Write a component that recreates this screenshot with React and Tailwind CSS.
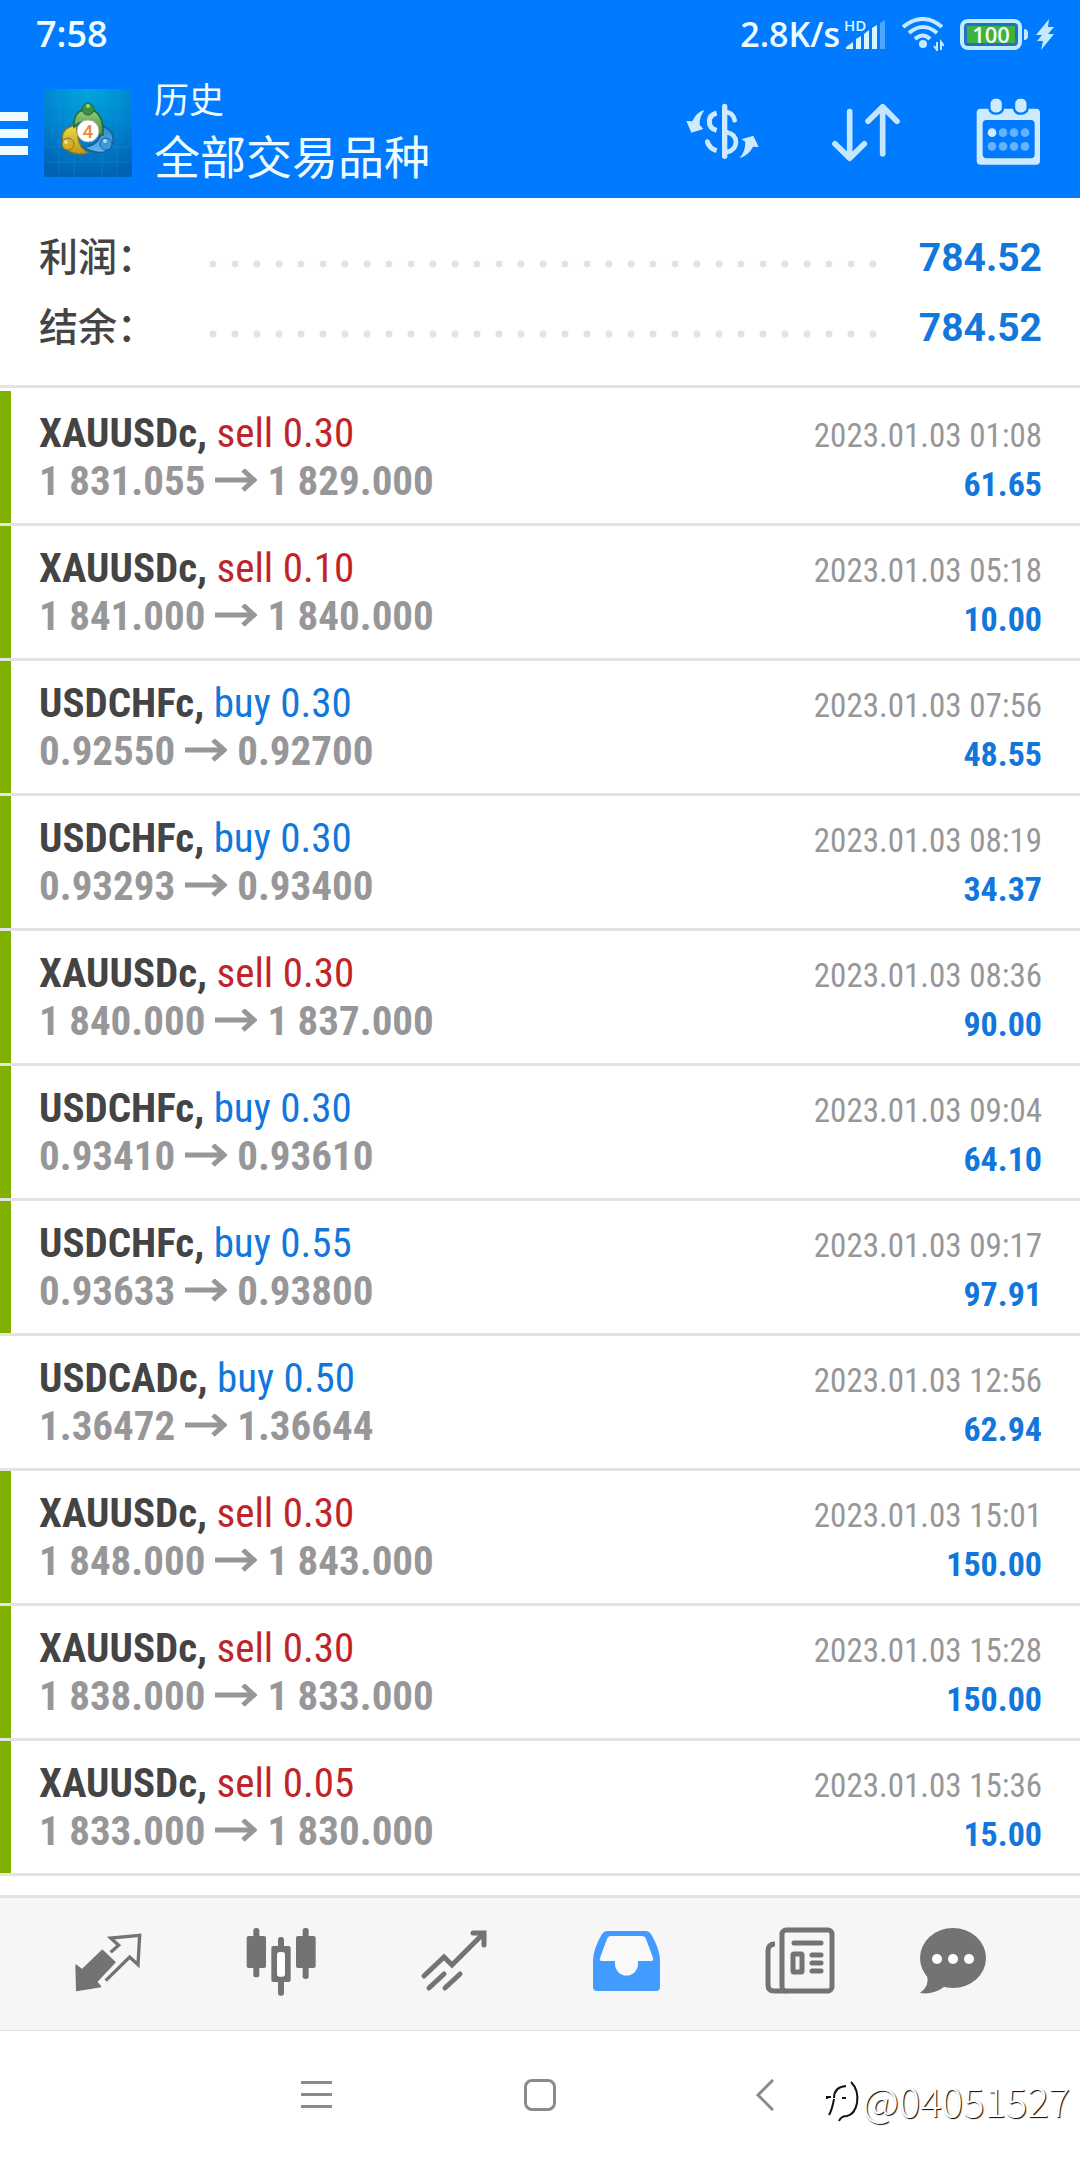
const trades = [
  { symbol: "XAUUSDc", side: "sell", volume: "0.30", open: "1 831.055", close: "1 829.000", time: "2023.01.03 01:08", profit: "61.65", marked: true },
  { symbol: "XAUUSDc", side: "sell", volume: "0.10", open: "1 841.000", close: "1 840.000", time: "2023.01.03 05:18", profit: "10.00", marked: true },
  { symbol: "USDCHFc", side: "buy", volume: "0.30", open: "0.92550", close: "0.92700", time: "2023.01.03 07:56", profit: "48.55", marked: true },
  { symbol: "USDCHFc", side: "buy", volume: "0.30", open: "0.93293", close: "0.93400", time: "2023.01.03 08:19", profit: "34.37", marked: true },
  { symbol: "XAUUSDc", side: "sell", volume: "0.30", open: "1 840.000", close: "1 837.000", time: "2023.01.03 08:36", profit: "90.00", marked: true },
  { symbol: "USDCHFc", side: "buy", volume: "0.30", open: "0.93410", close: "0.93610", time: "2023.01.03 09:04", profit: "64.10", marked: true },
  { symbol: "USDCHFc", side: "buy", volume: "0.55", open: "0.93633", close: "0.93800", time: "2023.01.03 09:17", profit: "97.91", marked: true },
  { symbol: "USDCADc", side: "buy", volume: "0.50", open: "1.36472", close: "1.36644", time: "2023.01.03 12:56", profit: "62.94", marked: false },
  { symbol: "XAUUSDc", side: "sell", volume: "0.30", open: "1 848.000", close: "1 843.000", time: "2023.01.03 15:01", profit: "150.00", marked: true },
  { symbol: "XAUUSDc", side: "sell", volume: "0.30", open: "1 838.000", close: "1 833.000", time: "2023.01.03 15:28", profit: "150.00", marked: true },
  { symbol: "XAUUSDc", side: "sell", volume: "0.05", open: "1 833.000", close: "1 830.000", time: "2023.01.03 15:36", profit: "15.00", marked: true },
];

const summary = [
  { label: "利润：", value: "784.52" },
  { label: "结余：", value: "784.52" },
];

function SignalIcon() {
  return (
    <svg className="h-[31px] w-[42px] overflow-visible" viewBox="0 0 42 31" fill="#d9f6ff" aria-hidden="true">
      <text x="0" y="12" fontSize="15" fontWeight="600" fontFamily="Open Sans, sans-serif">HD</text>
      <path d="M2 30 L2 28 L9 23 V30Z" />
      <path d="M12 30 V20 L17 17 V30Z" />
      <path d="M20 30 V15 L25 11 V30Z" />
      <path d="M28 30 V9 L33 6 V30Z" />
      <path d="M36 30 V4 L41 1 V30Z" opacity="0.35" />
    </svg>
  );
}

function WifiIcon() {
  return (
    <svg className="h-[34px] w-[43px]" viewBox="0 0 43 34" fill="none" stroke="#c4eaff" aria-hidden="true">
      <path d="M2 10 Q22 -6 41 10" strokeWidth="4" />
      <path d="M8 16 Q22 4 36 16" strokeWidth="4" />
      <path d="M14 22 Q22 15 29 22" strokeWidth="4" />
      <circle cx="22" cy="27" r="4" fill="#c4eaff" stroke="none" />
      <path d="M36 25 V33 L33 29 M40 33 V25 L43 29" strokeWidth="2" />
    </svg>
  );
}

function BoltIcon() {
  return (
    <svg className="h-[31px] w-[18px]" viewBox="0 0 18 31" fill="#c4eaff" aria-hidden="true">
      <path d="M13 0 L0 16 H6 L1 22 H7 L5 31 L18 15 H12 L18 8 H12Z" />
    </svg>
  );
}

function Logo() {
  return (
    <svg className="h-[88px] w-[88px] shrink-0" viewBox="0 0 88 88" role="img" aria-label="4">
      <defs>
        <radialGradient id="sky" cx="0.5" cy="0" r="1">
          <stop offset="0" stopColor="#00a6e0" />
          <stop offset="0.6" stopColor="#0080cc" />
          <stop offset="1" stopColor="#0062b4" />
        </radialGradient>
        <linearGradient id="green" x1="0" y1="0" x2="0" y2="1">
          <stop offset="0" stopColor="#9ccc88" />
          <stop offset="1" stopColor="#3f9232" />
        </linearGradient>
        <linearGradient id="gold" x1="0" y1="0" x2="0" y2="1">
          <stop offset="0" stopColor="#e8dc4a" />
          <stop offset="1" stopColor="#c09a1c" />
        </linearGradient>
        <linearGradient id="azure" x1="0" y1="0" x2="0" y2="1">
          <stop offset="0" stopColor="#2f86c4" />
          <stop offset="1" stopColor="#63b8ee" />
        </linearGradient>
      </defs>
      <rect width="88" height="88" fill="url(#sky)" />
      <path d="M15 0V88M30 0V88M58 0V88M73 0V88M0 15H88M0 30H88M0 58H88M0 73H88" stroke="#29a0dc" strokeWidth="1" opacity="0.25" />
      <path d="M32 36 Q15 39 19 54 Q24 68 44 64 Q35 58 34 48Z" fill="url(#gold)" stroke="#80762a" strokeWidth="1.5" />
      <path d="M56 36 Q73 42 68 56 Q60 70 39 58 Q52 58 57 46Z" fill="url(#azure)" stroke="#1a5d9c" strokeWidth="1.5" />
      <path d="M30 38 Q29 21 44 20 Q60 22 59 46 L53 46 Q54 34 44 33 Q36 32 30 38Z" fill="url(#green)" stroke="#1e6a35" strokeWidth="1.5" />
      <circle cx="44" cy="20" r="6" fill="#3c9140" stroke="#1e6a35" />
      <circle cx="44" cy="17" r="2" fill="#9bd08f" />
      <circle cx="24" cy="55" r="6" fill="#d4ae2c" stroke="#80762a" />
      <circle cx="22" cy="53" r="2" fill="#f2e08a" />
      <circle cx="62" cy="55" r="6" fill="#3d9bdd" stroke="#1a5d9c" />
      <circle cx="61" cy="52" r="2" fill="#a5d8f7" />
      <circle cx="44" cy="42" r="11" fill="#fff" stroke="#b9b39a" strokeWidth="1" />
      <text x="44" y="49" textAnchor="middle" fontSize="19" fontWeight="500" fontFamily="Roboto, sans-serif" fill="#f0883a">4</text>
    </svg>
  );
}

function CurrencyIcon() {
  return (
    <svg className="h-[72px] w-[84px]" viewBox="30 18 252 216" fill="none" stroke="#cdeaff" strokeLinecap="round" aria-hidden="true">
      <path d="M164 46 V196" strokeWidth="16" />
      <path d="M140 66 Q118 72 118 92 Q118 112 140 118" strokeWidth="15" strokeLinecap="butt" />
      <path d="M172 64 Q190 68 194 88" strokeWidth="14" />
      <path d="M112 152 Q118 172 140 179" strokeWidth="15" strokeLinecap="butt" />
      <circle cx="112" cy="152" r="7" fill="#cdeaff" stroke="none" />
      <path d="M170 124 Q198 130 198 154 Q196 178 170 184" strokeWidth="14" />
      <path d="M104 57 Q80 62 67 91 L49 90 L64 125 L100 114 L89 101 Q88 76 104 57Z" fill="#cdeaff" stroke="none" />
      <path d="M208 201 Q226 184 226 152 L214 145 L250 134 L266 168 L249 167 Q236 194 208 201Z" fill="#cdeaff" stroke="none" />
    </svg>
  );
}

function SortIcon() {
  return (
    <svg className="h-[72px] w-[84px]" viewBox="546 288 252 216" fill="none" stroke="#c4e6ff" strokeWidth="17" strokeLinecap="round" strokeLinejoin="round" aria-hidden="true">
      <path d="M626 332 V470 M582 428 L626 472 L670 428" />
      <path d="M725 458 V320 M681 361 L725 317 L768 361" />
    </svg>
  );
}

function CalendarIcon() {
  const dots = [1056, 1089, 1122, 1155];
  return (
    <svg className="h-[72px] w-[84px]" viewBox="978 288 252 216" aria-hidden="true">
      <path fill="#cdeaff" fillRule="evenodd" d="M1022 323 H1188 Q1200 323 1200 335 V480 Q1200 491 1188 491 H1022 Q1010 491 1010 480 V335 Q1010 323 1022 323Z M1040 357 Q1028 357 1028 369 V460 Q1028 472 1040 472 H1172 Q1184 472 1184 460 V369 Q1184 357 1172 357Z" />
      <rect x="1048" y="290" width="41" height="48" rx="18" fill="#cdeaff" stroke="#007aff" strokeWidth="7" />
      <rect x="1122" y="290" width="41" height="48" rx="18" fill="#cdeaff" stroke="#007aff" strokeWidth="7" />
      {dots.map((x, i) => (
        <g key={x}>
          <circle cx={x} cy="395" r="13" fill={i === 0 ? "#cdeaff" : "#66b2ff"} />
          <circle cx={x} cy="436" r="13" fill="#66b2ff" />
        </g>
      ))}
    </svg>
  );
}

function QuotesIcon() {
  return (
    <svg className="h-[72px] w-[72px]" viewBox="36 30 216 216" aria-hidden="true">
      <path fill="#737373" stroke="#737373" strokeWidth="4" strokeLinejoin="round" d="M127 106 L165 142 L110 200 L122 215 L50 227 L48 150 L66 164Z" />
      <path fill="none" stroke="#737373" strokeWidth="10" d="M152 112 L176 91 L152 69 L239 61 L234 149 L209 126 L137 197" />
    </svg>
  );
}

function ChartIcon() {
  return (
    <svg className="h-[72px] w-[72px]" viewBox="555 30 216 216" fill="#737373" aria-hidden="true">
      <rect x="580" y="39" width="18" height="148" rx="8" />
      <rect x="560" y="63" width="58" height="96" rx="6" />
      <rect x="728" y="39" width="18" height="153" rx="8" />
      <rect x="708" y="63" width="59" height="96" rx="6" />
      <rect x="654" y="66" width="18" height="50" rx="8" />
      <rect x="654" y="180" width="18" height="62" rx="8" />
      <rect x="634" y="93" width="58" height="108" rx="6" />
      <rect x="651" y="111" width="24" height="74" rx="8" fill="#fff" />
    </svg>
  );
}

function TradeIcon() {
  return (
    <svg className="h-[72px] w-[72px]" viewBox="0 0 72 72" fill="none" stroke="#737373" strokeWidth="5" strokeLinecap="round" aria-hidden="true">
      <path d="M6 51 L26 32 L34 40 L65 9" />
      <path d="M55 8 H66 V20" />
      <path d="M11 63 L26 49 M27 63 L42 49" />
    </svg>
  );
}

function InboxIcon() {
  return (
    <svg className="h-[72px] w-[72px]" viewBox="0 0 72 72" aria-hidden="true">
      <path fill="#429cff" d="M16 6 H55 Q58 6 60 9 Q69 24 69 36 V62 Q69 66 65 66 H6 Q2 66 2 62 V36 Q2 24 11 9 Q13 6 16 6Z" />
      <path fill="#f9f9f9" d="M20 11 H51 Q54 11 55 14 L62 33 Q63 36 60 36 H47 V39 A11 11 0 0 1 24 39 V36 H11 Q8 36 9 33 L16 14 Q17 11 20 11Z" />
    </svg>
  );
}

function NewsIcon() {
  return (
    <svg className="h-[72px] w-[72px]" viewBox="0 0 72 72" fill="none" stroke="#737373" strokeWidth="5" strokeLinecap="round" aria-hidden="true">
      <path d="M11 19 Q4 19 4 26 V60 Q4 66 10 66 H22" strokeLinecap="butt" />
      <rect x="18" y="5" width="50" height="61" rx="4" />
      <path d="M30 18 H57 M48 30 H57 M48 38 H57 M48 46 H57" />
      <rect x="29" y="29" width="9" height="18" rx="1" />
    </svg>
  );
}

function ChatIcon() {
  return (
    <svg className="h-[72px] w-[72px]" viewBox="0 0 72 72" fill="#737373" aria-hidden="true">
      <ellipse cx="36" cy="33" rx="33" ry="30" />
      <path d="M10 50 Q13 61 3 68 Q16 70 27 62Z" />
      <g fill="#fff">
        <circle cx="20" cy="34" r="5" />
        <circle cx="36" cy="34" r="5" />
        <circle cx="52" cy="34" r="5" />
      </g>
    </svg>
  );
}

const tabs = [
  { name: "行情", Icon: QuotesIcon },
  { name: "图表", Icon: ChartIcon },
  { name: "交易", Icon: TradeIcon },
  { name: "历史", Icon: InboxIcon },
  { name: "新闻", Icon: NewsIcon },
  { name: "聊天", Icon: ChatIcon },
];

function TradeRow({ trade }) {
  const sideColor = trade.side === "sell" ? "text-[#bf2429]" : "text-[#1277dc]";
  return (
    <li
      className={`flex h-[135px] items-center justify-between border-b-3 border-[#e4e4e4] pr-[38px] pl-[39px] ${
        trade.marked ? "bg-linear-to-r from-[#80b000] from-[11px] to-white to-[11px]" : "bg-white"
      }`}
    >
      <div className="text-[41px] leading-12">
        <p>
          <span className="font-bold text-[#444444]">{trade.symbol},</span>{" "}
          <span className={sideColor}>{trade.side} {trade.volume}</span>
        </p>
        <p className="flex items-center gap-[10px] font-bold text-[#979799]">
          <span>{trade.open}</span>
          <svg className="h-6 w-[42px]" viewBox="0 0 42 24" fill="none" stroke="#979799" strokeWidth="5" aria-hidden="true">
            <path d="M0 11 H39 M28 1 L39 11 L28 21" />
          </svg>
          <span>{trade.close}</span>
        </p>
      </div>
      <div className="pt-[6px] text-right leading-12">
        <p className="text-[33px] leading-12 text-[#979799]">{trade.time}</p>
        <p className="text-[34px] leading-12 font-bold text-[#1277dc]">{trade.profit}</p>
      </div>
    </li>
  );
}

export default function App() {
  return (
    <div className="flex min-h-screen flex-col bg-white font-['Roboto_Condensed','Roboto','Noto_Sans_CJK_SC',sans-serif]">
      <header className="bg-[#007aff] text-[#effcff]">
        <div className="flex h-[68px] items-center justify-between pr-[26px] pl-9 font-['Open_Sans','Noto_Sans',sans-serif] text-[34px] font-semibold">
          <span className="text-[36px]">7:58</span>
          <div className="flex items-center">
            <span className="pr-1">2.8K/s</span>
            <SignalIcon />
            <div className="pl-[15px]"><WifiIcon /></div>
            <div className="ml-4 flex h-[31px] w-[62px] items-center rounded-lg border-4 border-[#c4eaff] bg-[#1f70c8] p-[3px]">
              <span className="flex h-full w-full items-center justify-center bg-[#3fb13f] text-[22px] leading-none text-[#effcff]">100</span>
            </div>
            <span className="ml-[2px] h-[11px] w-1 rounded-r-full bg-[#c4eaff]" />
            <div className="pl-2"><BoltIcon /></div>
          </div>
        </div>
        <div className="flex h-[130px] items-center pr-[30px]">
          <button aria-label="菜单" className="flex w-7 flex-col gap-2">
            <span className="h-[9px] bg-[#effcff]" />
            <span className="h-[9px] bg-[#effcff]" />
            <span className="h-[9px] bg-[#effcff]" />
          </button>
          <div className="pl-4"><Logo /></div>
          <div className="pb-[6px] pl-[22px] font-['Noto_Sans_CJK_SC',sans-serif]">
            <p className="text-[35px] leading-12">历史</p>
            <h1 className="text-[46px] leading-16">全部交易品种</h1>
          </div>
          <div className="ml-auto flex gap-[59px]">
            <button aria-label="货币"><CurrencyIcon /></button>
            <button aria-label="排序"><SortIcon /></button>
            <button aria-label="日期"><CalendarIcon /></button>
          </div>
        </div>
      </header>

      <section className="border-b-3 border-[#e4e4e4] pt-6 pr-[38px] pb-[23px] pl-[39px]">
        {summary.map((item) => (
          <div key={item.label} className="flex h-[70px] items-center">
            <span className="w-[163px] pb-[6px] font-['Noto_Sans_CJK_SC',sans-serif] text-[39px] font-medium text-[#444444]">{item.label}</span>
            <span className="mt-[14px] h-2 flex-1 bg-[radial-gradient(circle,#e2e2e2_3px,transparent_4px)] bg-[size:22px_8px] bg-repeat-x" />
            <span className="w-[158px] pt-[2px] text-right font-['Roboto',sans-serif] text-[39px] font-bold text-[#1277dc]">{item.value}</span>
          </div>
        ))}
      </section>

      <main className="flex-1 pt-[3px]">
        <ul>
          {trades.map((trade) => (
            <TradeRow key={trade.time} trade={trade} />
          ))}
        </ul>
      </main>

      <nav className="grid h-[136px] grid-cols-[173fr_173fr_173fr_173fr_173fr_132fr] items-center border-t-3 border-b border-[#e2e2e2] bg-[#f6f6f6] pr-[61px] pl-[21px]">
        {tabs.map(({ name, Icon }) => (
          <button key={name} aria-label={name} className="flex justify-center pb-[6px]">
            <Icon />
          </button>
        ))}
      </nav>

      <footer className="relative flex h-[129px] items-center justify-center gap-[176px] pb-[2px]">
        <button aria-label="最近" className="flex h-12 w-12 flex-col items-center justify-center gap-[9px]">
          <span className="h-[3px] w-[31px] bg-[#8a8a8a]" />
          <span className="h-[3px] w-[31px] bg-[#8a8a8a]" />
          <span className="h-[3px] w-[31px] bg-[#8a8a8a]" />
        </button>
        <button aria-label="主屏幕" className="flex h-12 w-12 items-center justify-center">
          <span className="h-8 w-8 rounded-lg border-3 border-[#8a8a8a]" />
        </button>
        <button aria-label="返回" className="flex h-12 w-12 items-center justify-center">
          <svg className="h-8 w-5" viewBox="0 0 20 32" fill="none" stroke="#8a8a8a" strokeWidth="3" aria-hidden="true">
            <path d="M19 1 L4 16 L19 31" />
          </svg>
        </button>
        <div className="absolute right-[10px] bottom-[30px] flex items-center">
          <svg className="h-11 w-9" viewBox="0 0 36 44" fill="none" stroke="#111" strokeWidth="2" aria-hidden="true">
            <path d="M1 21 V19 H5 M8 21 Q6 32 3 37 M8 20 Q8 9 20 8 M16 20 H20" />
            <path d="M25 4 Q33 12 31 25 Q29 36 21 38 Q15 38 13 43" />
          </svg>
          <span className="font-['Noto_Sans_CJK_SC',sans-serif] text-[40px] leading-[60px] font-light text-white [text-shadow:1px_1px_1px_#000]">@04051527</span>
        </div>
      </footer>
    </div>
  );
}
